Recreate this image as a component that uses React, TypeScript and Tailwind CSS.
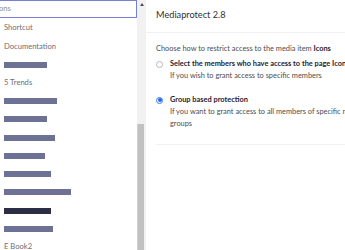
import React from "react";

const bars: { w: number; dark?: boolean }[] = [
  { w: 53 },
  { w: 43 },
  { w: 51 },
  { w: 41 },
  { w: 47 },
  { w: 67 },
  { w: 47, dark: true },
  { w: 49 },
];

function Row({ children }: { children: React.ReactNode }) {
  return <div className="h-[18.25px] shrink-0 flex items-center pl-[4px] whitespace-nowrap">{children}</div>;
}

function Bar({ w, dark }: { w: number; dark?: boolean }) {
  return (
    <Row>
      <div className={dark ? "h-[6px] bg-[#2b2e45]" : "h-[6px] bg-[#6d7295]"} style={{ width: w }} />
    </Row>
  );
}

export default function App() {
  return (
    <div
      className="flex h-[250px] w-[345px] overflow-hidden bg-white"
      style={{ fontFamily: "Lato, 'Open Sans', sans-serif" }}
    >
      {/* Sidebar */}
      <div className="w-[137px] shrink-0 flex flex-col overflow-hidden text-[7.6px] text-[#6e6e72]">
        <div className="h-[18px] shrink-0 -ml-[8px] border-y border-r border-[#7880d6] flex items-center pl-[1.5px] text-[#8a8a8e]">
          Icons
        </div>
        <div className="mt-[1px] flex flex-col">
          <Row>Shortcut</Row>
          <Row>Documentation</Row>
          <Bar w={43} />
          <Row>5 Trends</Row>
          {bars.map((b, i) => (
            <Bar key={i} w={b.w} dark={b.dark} />
          ))}
          <Row>E Book2</Row>
        </div>
      </div>

      {/* Scrollbar */}
      <div className="w-[9px] shrink-0 bg-[#f1f1f1] flex flex-col">
        <div className="h-[124px] shrink-0 flex justify-start pl-[3px] pt-[3px]">
          <svg width="4" height="3" viewBox="0 0 4 3">
            <polygon points="2,0 4,3 0,3" fill="#505050" />
          </svg>
        </div>
        <div className="flex-1 w-[7px] bg-[#c1c1c1] border-l border-[#cfcfcf]" />
      </div>

      {/* Main */}
      <div className="flex-1 min-w-0 flex flex-col overflow-hidden">
        <div className="h-[33px] shrink-0 border-b border-[#f1f1f1] flex items-center pl-[10px] pb-[3px] text-[9.2px] text-[#303033] whitespace-nowrap">
          Mediaprotect 2.8
        </div>
        <div className="pl-[10px] pt-[10px] text-[7.4px] leading-[12px] text-[#4c4c4f]">
          <div className="whitespace-nowrap">
            Choose how to restrict access to the media item <span className="font-bold text-[#1f2130]">Icons</span>
          </div>
          <div className="mt-[3px] flex">
            <div className="w-[14px] shrink-0 pt-[2.5px]">
              <div className="w-[7px] h-[7px] rounded-full border border-[#b9b9bd] bg-white" />
            </div>
            <div className="whitespace-nowrap">
              <div className="font-bold text-[#1f2130]">Select the members who have access to the page Icons</div>
              <div>If you wish to grant access to specific members</div>
            </div>
          </div>
          <div className="mt-[12px] flex">
            <div className="w-[14px] shrink-0 pt-[2.5px]">
              <div className="w-[7px] h-[7px] rounded-full border border-[#3b7cf0] bg-white flex items-center justify-center">
                <div className="w-[4px] h-[4px] rounded-full bg-[#1e6cf0]" />
              </div>
            </div>
            <div className="w-[300px]">
              <div className="font-bold text-[#1f2130] whitespace-nowrap">Group based protection</div>
              <div className="w-[215px]">
                If you want to grant access to all members of specific member groups
              </div>
            </div>
          </div>
          <div className="mt-[14px] border-t border-[#f1f1f1]" />
        </div>
      </div>
    </div>
  );
}
